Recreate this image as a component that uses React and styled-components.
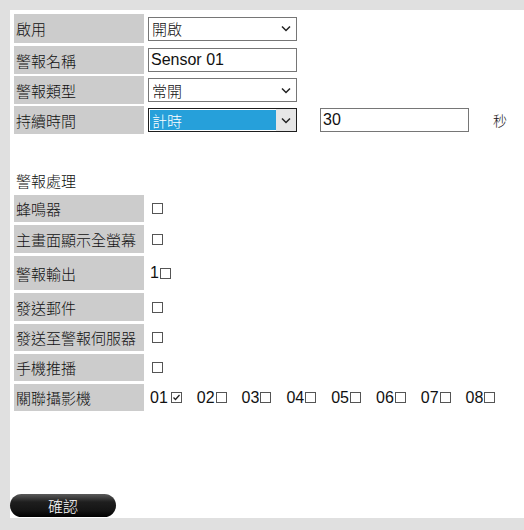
import React from 'react';
import styled, { createGlobalStyle } from 'styled-components';

const Global = createGlobalStyle`
  html, body {
    margin: 0;
    padding: 0;
    background: #e0e0e0;
    font-family: "Liberation Sans", "Noto Sans CJK TC", sans-serif;
  }
`;

const Page = styled.div`
  padding: 10px 0 12px 10px;
  height: 530px;
  box-sizing: border-box;
`;

const Panel = styled.div`
  background: #fff;
  height: 508px;
  padding: 4px 0 0 4px;
  box-sizing: border-box;
  display: flex;
  flex-direction: column;
`;

const Rows = styled.div`
  display: flex;
  flex-direction: column;
  gap: ${({ gap }) => gap || 2}px;
`;

const Row = styled.div`
  display: flex;
  align-items: center;
  gap: 4px;
  height: ${({ h }) => h || 28}px;
`;

const Label = styled.div`
  width: 130px;
  height: 100%;
  background: #cccccc;
  display: flex;
  align-items: center;
  padding-left: 2px;
  box-sizing: border-box;
  font-size: 15px;
  font-weight: 300;
  color: #111;
  white-space: nowrap;
`;

const Select = styled.div`
  width: 149px;
  height: 24px;
  box-sizing: border-box;
  border: 1px solid ${({ focused }) => (focused ? '#1e1e1e' : '#767676')};
  display: flex;
  align-items: stretch;
  padding: ${({ focused }) => (focused ? '1px' : '0')};
`;

const SelectText = styled.div`
  flex: 1;
  display: flex;
  align-items: center;
  padding-left: ${({ focused }) => (focused ? '2px' : '3px')};
  font-size: 15px;
  font-weight: 300;
  color: ${({ focused }) => (focused ? '#fff' : '#111')};
  background: ${({ focused }) => (focused ? '#26a0da' : 'transparent')};
`;

const Arrow = styled.div`
  width: 20px;
  display: flex;
  align-items: center;
  justify-content: center;
  background: ${({ focused }) => (focused ? '#e6e6e6' : 'transparent')};
  margin: ${({ focused }) => (focused ? '-1px -1px -1px 0' : '0')};
`;

const TextInput = styled.div`
  width: ${({ w }) => w || 149}px;
  height: 24px;
  box-sizing: border-box;
  border: 1px solid #767676;
  display: flex;
  align-items: center;
  padding-left: 2px;
  font-size: 16px;
  color: #111;
  margin-left: ${({ ml }) => ml || 0}px;
`;

const Unit = styled.span`
  font-size: 14px;
  font-weight: 300;
  color: #111;
  margin-left: 20px;
`;

const SectionTitle = styled.div`
  font-size: 15px;
  font-weight: 300;
  color: #111;
  padding: 36px 0 4px 2px;
`;

const Value = styled.div`
  display: flex;
  align-items: center;
  font-size: 16px;
  color: #111;
  padding-left: 2px;
`;

const Box = styled.span`
  width: 11px;
  height: 11px;
  box-sizing: border-box;
  border: 1px solid #555;
  background: #fff;
  display: inline-flex;
  align-items: center;
  justify-content: center;
  margin-left: ${({ ml }) => (ml === undefined ? 1 : ml)}px;
`;

const Cam = styled.span`
  display: inline-flex;
  align-items: center;
  margin-right: 15px;
`;

const Footer = styled.div`
  margin-top: auto;
  margin-left: -4px;
  padding-bottom: 1px;
`;

const ConfirmButton = styled.button`
  width: 106px;
  height: 23px;
  border-radius: 12px;
  border: none;
  background: linear-gradient(#5a5a5a 0%, #1e1e1e 35%, #151515 70%, #000 100%);
  color: #fff;
  font-family: "Noto Sans CJK TC", sans-serif;
  font-size: 15px;
  font-weight: 300;
  padding: 0;
  display: flex;
  align-items: center;
  justify-content: center;
  line-height: 1;
`;

const Chevron = ({ color = '#222' }) => (
  <svg width="10" height="7" viewBox="0 0 10 7">
    <path d="M1 1.5 L5 5.5 L9 1.5" fill="none" stroke={color} strokeWidth="1.5" />
  </svg>
);

const Check = () => (
  <svg width="9" height="9" viewBox="0 0 9 9">
    <path d="M1.5 4.5 L3.5 6.5 L7.5 2" fill="none" stroke="#222" strokeWidth="1.3" />
  </svg>
);

const Dropdown = ({ value, focused }) => (
  <Select focused={focused}>
    <SelectText focused={focused}>{value}</SelectText>
    <Arrow focused={focused}><Chevron /></Arrow>
  </Select>
);

const cams = ['01', '02', '03', '04', '05', '06', '07', '08'];

const actions = [
  { label: '蜂鳴器', h: 27 },
  { label: '主畫面顯示全螢幕', h: 28 },
  { label: '警報輸出', prefix: '1', h: 34 },
  { label: '發送郵件', h: 28 },
  { label: '發送至警報伺服器', h: 27 },
  { label: '手機推播', h: 27 },
];

export default function App() {
  return (
    <>
      <Global />
      <Page>
        <Panel>
          <Rows gap={2}>
            <Row h={29}>
              <Label>啟用</Label>
              <Dropdown value="開啟" />
            </Row>
            <Row h={28} style={{ marginTop: 1 }}>
              <Label>警報名稱</Label>
              <TextInput>Sensor 01</TextInput>
            </Row>
            <Row h={28}>
              <Label>警報類型</Label>
              <Dropdown value="常開" />
            </Row>
            <Row h={28}>
              <Label>持續時間</Label>
              <Dropdown value="計時" focused />
              <TextInput w={149} ml={19}>30</TextInput>
              <Unit>秒</Unit>
            </Row>
          </Rows>
          <SectionTitle>警報處理</SectionTitle>
          <Rows gap={3}>
            {actions.map((a) => (
              <Row key={a.label} h={a.h}>
                <Label>{a.label}</Label>
                <Value>
                  {a.prefix}
                  <Box ml={a.prefix ? 1 : 2} />
                </Value>
              </Row>
            ))}
            <Row h={27}>
              <Label>關聯攝影機</Label>
              <Value>
                {cams.map((c, i) => (
                  <Cam key={c}>
                    {c}
                    <Box ml={i === 0 ? 3 : 1}>{i === 0 && <Check />}</Box>
                  </Cam>
                ))}
              </Value>
            </Row>
          </Rows>
          <Footer>
            <ConfirmButton>確認</ConfirmButton>
          </Footer>
        </Panel>
      </Page>
    </>
  );
}
